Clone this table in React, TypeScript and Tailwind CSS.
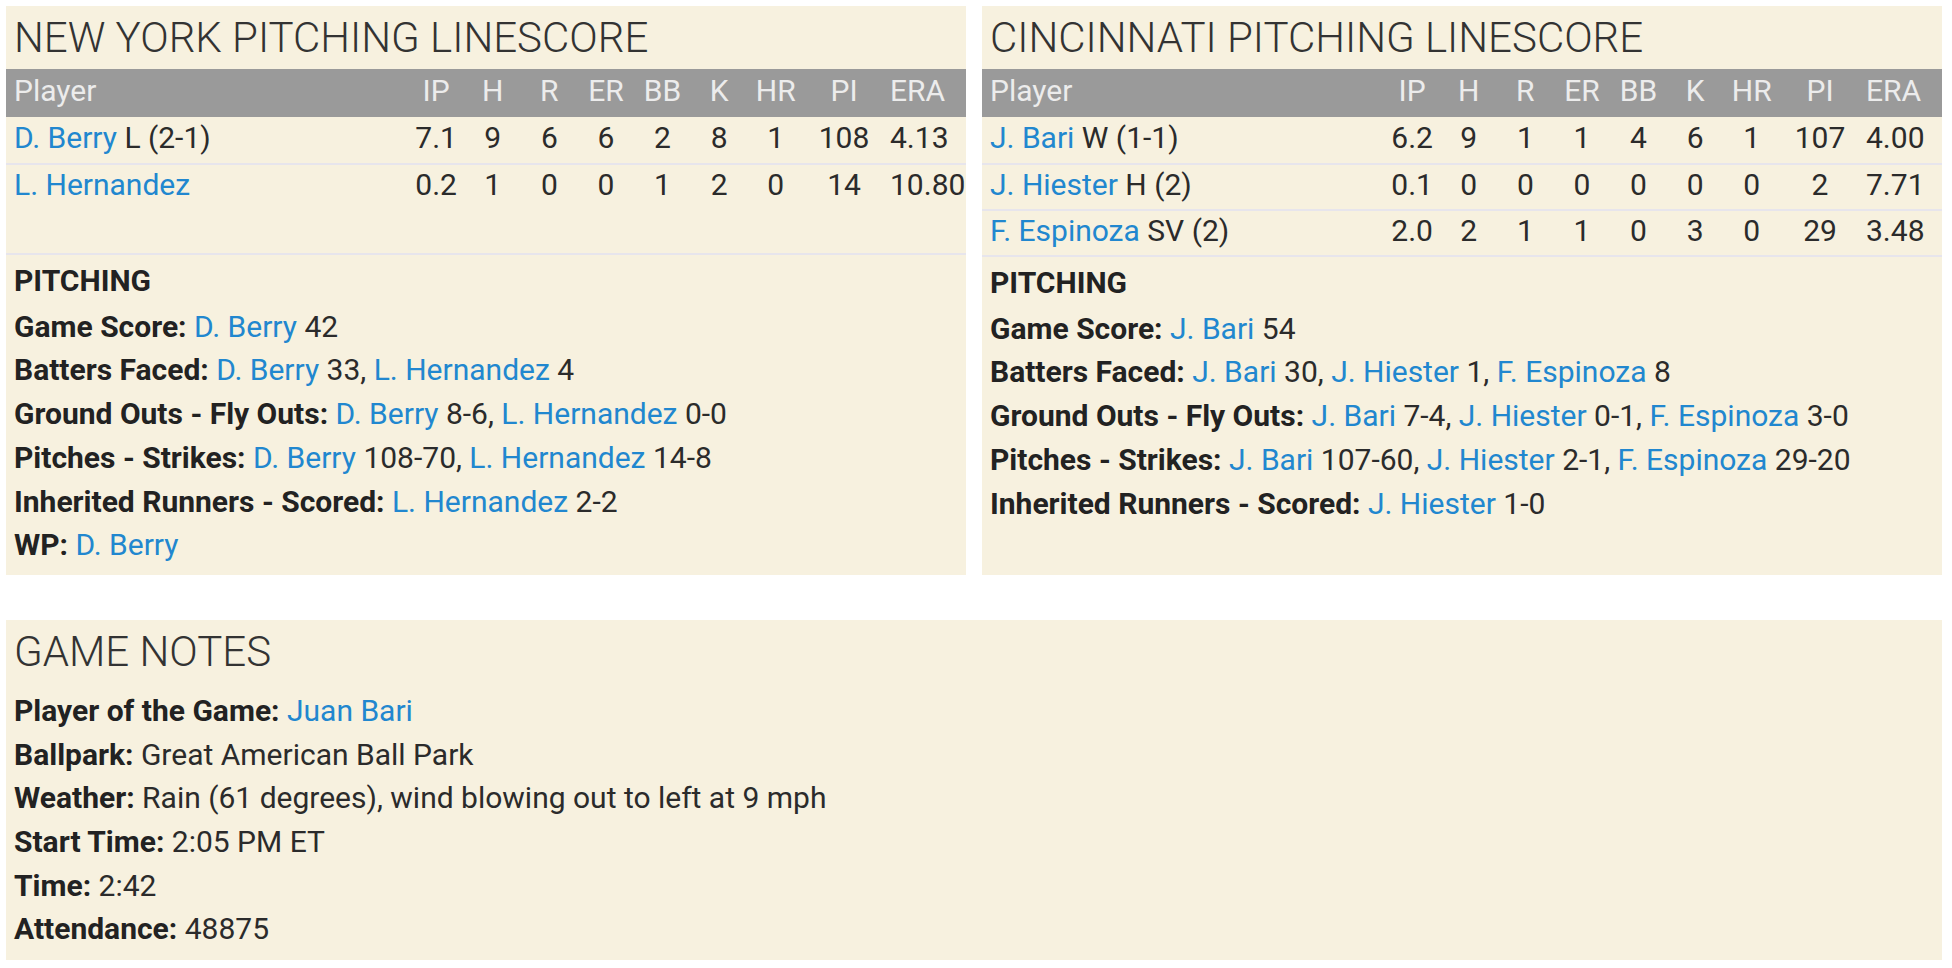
import React from "react";

type Pitcher = {
    name: string;
    note?: string;
    line: string[];
};

const nyPitchers: Pitcher[] = [
    { name: "D. Berry", note: "L (2-1)", line: ["7.1", "9", "6", "6", "2", "8", "1", "108", "4.13"] },
    { name: "L. Hernandez", line: ["0.2", "1", "0", "0", "1", "2", "0", "14", "10.80"] },
];

const cinPitchers: Pitcher[] = [
    { name: "J. Bari", note: "W (1-1)", line: ["6.2", "9", "1", "1", "4", "6", "1", "107", "4.00"] },
    { name: "J. Hiester", note: "H (2)", line: ["0.1", "0", "0", "0", "0", "0", "0", "2", "7.71"] },
    { name: "F. Espinoza", note: "SV (2)", line: ["2.0", "2", "1", "1", "0", "3", "0", "29", "3.48"] },
];

const columns = ["IP", "H", "R", "ER", "BB", "K", "HR", "PI", "ERA"];

// a stat is a list of [player, value] pairs
type Stat = { label: string; entries: [string, string][] };

const nyStats: Stat[] = [
    { label: "Game Score", entries: [["D. Berry", "42"]] },
    { label: "Batters Faced", entries: [["D. Berry", "33"], ["L. Hernandez", "4"]] },
    { label: "Ground Outs - Fly Outs", entries: [["D. Berry", "8-6"], ["L. Hernandez", "0-0"]] },
    { label: "Pitches - Strikes", entries: [["D. Berry", "108-70"], ["L. Hernandez", "14-8"]] },
    { label: "Inherited Runners - Scored", entries: [["L. Hernandez", "2-2"]] },
    { label: "WP", entries: [["D. Berry", ""]] },
];

const cinStats: Stat[] = [
    { label: "Game Score", entries: [["J. Bari", "54"]] },
    { label: "Batters Faced", entries: [["J. Bari", "30"], ["J. Hiester", "1"], ["F. Espinoza", "8"]] },
    { label: "Ground Outs - Fly Outs", entries: [["J. Bari", "7-4"], ["J. Hiester", "0-1"], ["F. Espinoza", "3-0"]] },
    { label: "Pitches - Strikes", entries: [["J. Bari", "107-60"], ["J. Hiester", "2-1"], ["F. Espinoza", "29-20"]] },
    { label: "Inherited Runners - Scored", entries: [["J. Hiester", "1-0"]] },
];

const Link: React.FC<{ children: React.ReactNode }> = ({ children }) => (
    <a href="#" className="text-[#2187cf]">{children}</a>
);

const gridCols = "grid grid-cols-[1fr_repeat(7,56.6px)_80px_82px] items-center leading-[40px]";

const Linescore: React.FC<{ title: string; pitchers: Pitcher[]; stats: Stat[] }> = ({ title, pitchers, stats }) => (
    <div className="flex-1 flex flex-col bg-[#f7f1df]">
        <h2 className="px-2 pt-[9px] mb-2 text-[42px] leading-[46px] font-light text-[#333]">{title}</h2>
        <div className={`${gridCols} h-[48px] pb-[5px] bg-[#9a9a9a] text-[#ececec]`}>
            <div className="pl-2">Player</div>
            {columns.map(c => (
                <div key={c} className={c === "ERA" ? "pl-[6px]" : "text-center"}>{c}</div>
            ))}
        </div>
        <div className="min-h-[138px] border-b-2 border-[#e7e5ec]">
            {pitchers.map((p, i) => (
                <div key={p.name} className={`${gridCols} h-[46px] pb-[4px] text-[#2b2b2b] ${i > 0 ? "border-t-2 border-[#e7e5ec]" : ""}`}>
                    <div className="pl-2 whitespace-nowrap">
                        <Link>{p.name}</Link>{p.note ? ` ${p.note}` : ""}
                    </div>
                    {p.line.map((v, j) => (
                        <div key={j} className={j === 8 ? "pl-[6px]" : "text-center"}>{v}</div>
                    ))}
                </div>
            ))}
        </div>
        <div className="px-2 pt-[6px] pb-2 leading-[43.7px] text-[#2b2b2b]">
            <div className="font-bold text-[#222] -mt-[2px] mb-[2px]">PITCHING</div>
            {stats.map(s => (
                <div key={s.label} className="whitespace-nowrap">
                    <span className="font-bold text-[#222]">{s.label}:</span>{" "}
                    {s.entries.map(([name, val], i) => (
                        <React.Fragment key={name}>
                            <Link>{name}</Link>{val ? ` ${val}` : ""}{i < s.entries.length - 1 ? ", " : ""}
                        </React.Fragment>
                    ))}
                </div>
            ))}
        </div>
    </div>
);

const App: React.FC = () => {
    return (
        <div className="min-h-screen bg-white pt-[6px] pl-[6px] pr-[10px] font-['Roboto',sans-serif] text-[30px]">
            <div className="flex gap-4">
                <Linescore title="NEW YORK PITCHING LINESCORE" pitchers={nyPitchers} stats={nyStats} />
                <Linescore title="CINCINNATI PITCHING LINESCORE" pitchers={cinPitchers} stats={cinStats} />
            </div>
            <div className="mt-[45px] bg-[#f7f1df]">
                <h2 className="px-2 pt-[9px] mb-[14px] text-[42px] leading-[46px] font-light text-[#333]">GAME NOTES</h2>
                <div className="px-2 pb-[9px] leading-[43.7px] text-[#2b2b2b]">
                    <div><span className="font-bold text-[#222]">Player of the Game:</span> <Link>Juan Bari</Link></div>
                    <div><span className="font-bold text-[#222]">Ballpark:</span> Great American Ball Park</div>
                    <div><span className="font-bold text-[#222]">Weather:</span> Rain (61 degrees), wind blowing out to left at 9 mph</div>
                    <div><span className="font-bold text-[#222]">Start Time:</span> 2:05 PM ET</div>
                    <div><span className="font-bold text-[#222]">Time:</span> 2:42</div>
                    <div><span className="font-bold text-[#222]">Attendance:</span> 48875</div>
                </div>
            </div>
        </div>
    );
};

export default App;
